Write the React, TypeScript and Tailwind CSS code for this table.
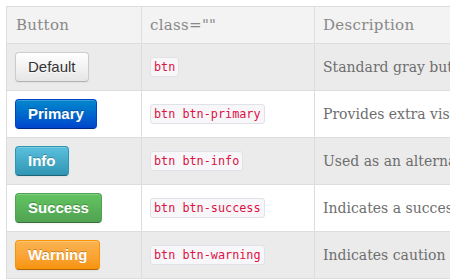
const rows = [
  {
    label: 'Default',
    cls: 'btn',
    desc: 'Standard gray button with gradient',
    btn: 'font-normal text-[#333] border-[#ccc] border-b-[#b3b3b3] bg-linear-to-b from-white to-[#e6e6e6] [text-shadow:0_1px_1px_rgba(255,255,255,0.75)]',
  },
  {
    label: 'Primary',
    cls: 'btn btn-primary',
    desc: 'Provides extra visual weight and identifies the primary action',
    btn: 'font-bold text-white border-[#0044cc] border-b-[#002a80] bg-linear-to-b from-[#0088cc] to-[#0044cc] [text-shadow:0_-1px_0_rgba(0,0,0,0.25)]',
  },
  {
    label: 'Info',
    cls: 'btn btn-info',
    desc: 'Used as an alternative to the default styles',
    btn: 'font-bold text-white border-[#2f96b4] border-b-[#1f6377] bg-linear-to-b from-[#5bc0de] to-[#2f96b4] [text-shadow:0_-1px_0_rgba(0,0,0,0.25)]',
  },
  {
    label: 'Success',
    cls: 'btn btn-success',
    desc: 'Indicates a successful or positive action',
    btn: 'font-bold text-white border-[#51a351] border-b-[#387038] bg-linear-to-b from-[#62c462] to-[#51a351] [text-shadow:0_-1px_0_rgba(0,0,0,0.25)]',
  },
  {
    label: 'Warning',
    cls: 'btn btn-warning',
    desc: 'Indicates caution should be taken with this action',
    btn: 'font-bold text-white border-[#f89406] border-b-[#ad6704] bg-linear-to-b from-[#fbb450] to-[#f89406] [text-shadow:0_-1px_0_rgba(0,0,0,0.25)]',
  },
]

const slab = "font-['DejaVu_Serif',serif]"

export default function App() {
  return (
    <div className="w-[450px] h-[280px] overflow-hidden bg-white">
      <div className="ml-[6px] mt-[6px] w-[700px] border-l border-t border-[#ddd]">
        {/* header */}
        <div className={`grid grid-cols-[134px_173px_1fr] bg-[#f3f3f3] border-b border-[#ddd] ${slab} text-[15px] leading-5 text-[#888] tracking-[0.3px]`}>
          <div className="px-[9px] py-2">Button</div>
          <div className="px-[8px] py-2 border-l border-[#ddd]">class=""</div>
          <div className="px-[8px] py-2 border-l border-[#ddd]">Description</div>
        </div>

        {rows.map((r, i) => (
          <div
            key={r.label}
            className={`grid grid-cols-[134px_173px_1fr] border-b border-[#ddd] ${i % 2 === 0 ? 'bg-[#ebebeb]' : 'bg-white'}`}
          >
            <div className="px-[8px] py-2 flex items-center">
              <span
                className={`inline-block px-3 py-1 text-[15px] leading-5 rounded-[4px] border font-['Liberation_Sans',Arial,sans-serif] shadow-[inset_0_1px_0_rgba(255,255,255,0.2),0_1px_2px_rgba(0,0,0,0.05)] ${r.btn}`}
              >
                {r.label}
              </span>
            </div>
            <div className="px-[8px] py-2 border-l border-[#ddd] flex items-center">
              <code className="px-[3px] py-[1px] rounded-[3px] border border-[#e1e1e8] bg-[#f7f7f9] text-[#dd1144] text-[11.8px] leading-4 font-['DejaVu_Sans_Mono',monospace]">
                {r.cls}
              </code>
            </div>
            <div className={`px-[8px] py-2 border-l border-[#ddd] flex items-center ${slab} text-[14px] text-[#6e6e6e] whitespace-nowrap`}>
              {r.desc}
            </div>
          </div>
        ))}
      </div>
    </div>
  )
}
